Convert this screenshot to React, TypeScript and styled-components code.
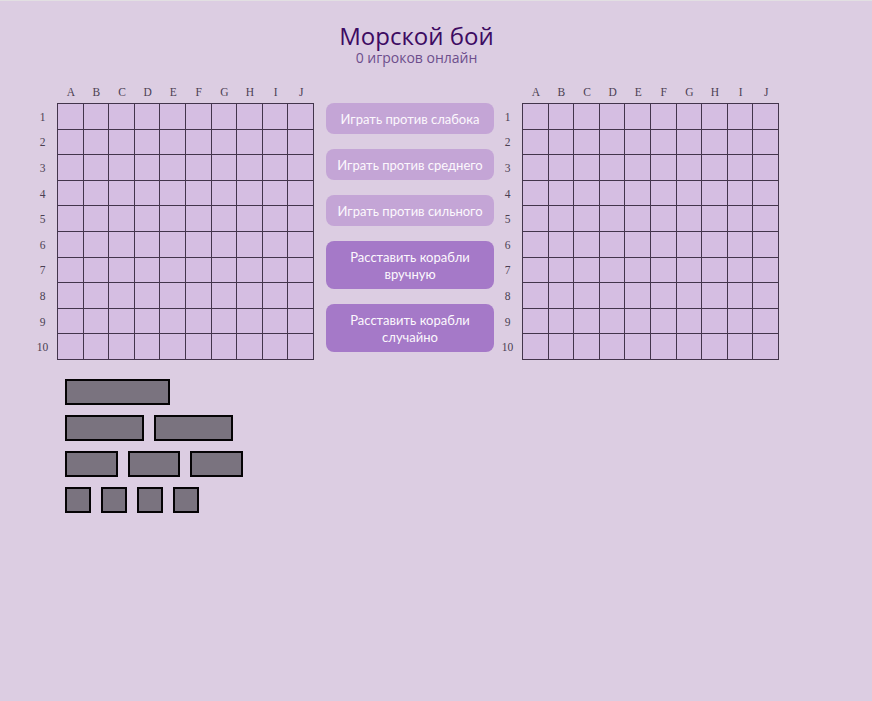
import React from "react";
import styled, { createGlobalStyle } from "styled-components";

const Global = createGlobalStyle`
  html, body { margin: 0; padding: 0; background: #dccde2; }
  body { border-top: 1px solid #e2dfe2; font-family: "Open Sans", sans-serif; }
`;

const Page = styled.div`
  width: 872px;
  min-height: 700px;
  box-sizing: border-box;
  padding: 0 0 0 29px;
  display: flex;
  flex-direction: column;
`;

const Header = styled.header`
  display: flex;
  flex-direction: column;
  align-items: center;
  padding: 23px 68px 0 0;
  height: 56px;
`;

const Title = styled.h1`
  margin: 0;
  font-family: "Open Sans", sans-serif;
  font-weight: 400;
  font-size: 24px;
  line-height: 24px;
  color: #3d0b62;
`;

const Subtitle = styled.div`
  font-family: "Open Sans", sans-serif;
  font-size: 14px;
  line-height: 15px;
  color: #6d4e8c;
  margin-top: 2px;
`;

const Arena = styled.div`
  display: flex;
  align-items: flex-start;
`;

const Board = styled.div`
  display: grid;
  grid-template-columns: 28px 257px;
  grid-template-rows: 23px 257px;
`;

const ColLabels = styled.div`
  grid-column: 2;
  grid-row: 1;
  display: grid;
  grid-template-columns: repeat(10, 25.6px);
  padding-left: 1px;
  align-items: center;
`;

const RowLabels = styled.div`
  grid-column: 1;
  grid-row: 2;
  display: grid;
  grid-template-rows: repeat(10, 25.6px);
  padding-top: 1px;
  padding-right: 1px;
`;

const Label = styled.span`
  font-family: "Liberation Serif", serif;
  font-size: 11.5px;
  color: #4b3f52;
  display: flex;
  align-items: center;
  justify-content: center;
`;

const Field = styled.div`
  grid-column: 2;
  grid-row: 2;
  display: grid;
  grid-template-columns: repeat(10, 25.6px);
  grid-template-rows: repeat(10, 25.6px);
  border-left: 1px solid #43354c;
  border-top: 1px solid #43354c;
  background: #d5bee2;
`;

const Cell = styled.div`
  box-sizing: border-box;
  border-right: 1px solid #43354c;
  border-bottom: 1px solid #43354c;
`;

const Controls = styled.div`
  display: flex;
  flex-direction: column;
  gap: 15px;
  width: 168px;
  margin: 23px 0 0 12px;
`;

const Button = styled.button<{ $strong?: boolean }>`
  border: none;
  border-radius: 8px;
  background: ${(p) => (p.$strong ? "#a579c8" : "#c4a5d6")};
  color: #fcf8fd;
  font-family: Lato, "Open Sans", sans-serif;
  font-size: 13px;
  line-height: 17px;
  white-space: nowrap;
  height: ${(p) => (p.$strong ? "48px" : "31px")};
  padding: 2px 0 0;
  cursor: pointer;
`;

const Fleet = styled.div`
  display: flex;
  flex-direction: column;
  gap: 10px;
  margin: 19px 0 0 36px;
`;

const FleetRow = styled.div`
  display: flex;
  gap: 10px;
`;

const Ship = styled.div<{ $size: number }>`
  box-sizing: border-box;
  width: ${(p) => [0, 26, 52.5, 79, 105][p.$size]}px;
  height: 26px;
  border: 2px solid #050305;
  background: #7a737f;
`;

const LETTERS = ["A", "B", "C", "D", "E", "F", "G", "H", "I", "J"];

function GameBoard() {
  return (
    <Board>
      <ColLabels>
        {LETTERS.map((l) => (
          <Label key={l}>{l}</Label>
        ))}
      </ColLabels>
      <RowLabels>
        {Array.from({ length: 10 }, (_, i) => (
          <Label key={i}>{i + 1}</Label>
        ))}
      </RowLabels>
      <Field>
        {Array.from({ length: 100 }, (_, i) => (
          <Cell key={i} />
        ))}
      </Field>
    </Board>
  );
}

const FLEET = [[4], [3, 3], [2, 2, 2], [1, 1, 1, 1]];

export default function App() {
  return (
    <>
      <Global />
      <Page>
        <Header>
          <Title>Морской бой</Title>
          <Subtitle>0 игроков онлайн</Subtitle>
        </Header>
        <Arena>
          <GameBoard />
          <Controls>
            <Button>Играть против слабока</Button>
            <Button>Играть против среднего</Button>
            <Button>Играть против сильного</Button>
            <Button $strong>
              Расставить корабли
              <br />
              вручную
            </Button>
            <Button $strong>
              Расставить корабли
              <br />
              случайно
            </Button>
          </Controls>
          <GameBoard />
        </Arena>
        <Fleet>
          {FLEET.map((row, r) => (
            <FleetRow key={r}>
              {row.map((s, i) => (
                <Ship key={i} $size={s} />
              ))}
            </FleetRow>
          ))}
        </Fleet>
      </Page>
    </>
  );
}
